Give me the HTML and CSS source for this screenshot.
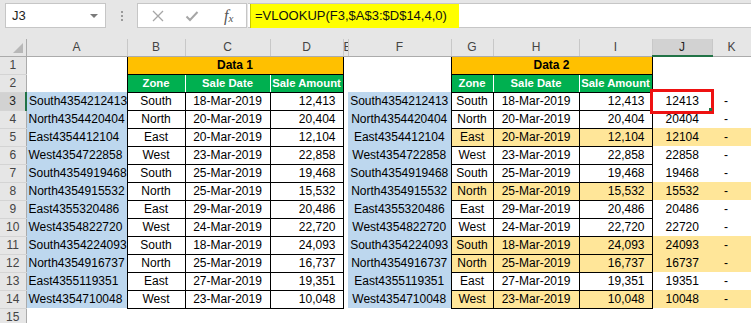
FILE: index.html
```html
<!DOCTYPE html>
<html lang="en">
<head>
    <meta charset="UTF-8">
    <title>VLOOKUP</title>
    <link rel="stylesheet" href="styles.css">
</head>
<body>
    <div class="formula-bar">
        <div class="name-box"><span>J3</span><span class="caret"></span></div>
        <div class="grip"><i></i><i></i><i></i></div>
        <div class="fx-buttons">
            <svg width="12" height="12" viewBox="0 0 12 12"><path d="M1 1 L11 11 M11 1 L1 11" stroke="#a6a6a6" stroke-width="1.3" fill="none"/></svg>
            <svg width="14" height="12" viewBox="0 0 14 12"><path d="M1.5 6.5 L5 10 L12.5 2" stroke="#a6a6a6" stroke-width="2" fill="none"/></svg>
            <span class="fx"><i>f</i><sub>x</sub></span>
        </div>
        <div class="formula-input"><span class="formula">=VLOOKUP(F3,$A$3:$D$14,4,0)</span></div>
    </div>

    <table class="sheet">
        <colgroup>
            <col style="width:26px"><col style="width:101px"><col style="width:58px"><col style="width:85px">
            <col style="width:73px"><col style="width:5px"><col style="width:103px"><col style="width:42px">
            <col style="width:86px"><col style="width:73px"><col style="width:60px"><col style="width:39px">
        </colgroup>
        <thead>
            <tr>
                <th class="corner"><span class="tri"></span></th>
                <th>A</th><th>B</th><th>C</th><th>D</th><th class="narrow">E</th><th>F</th>
                <th>G</th><th>H</th><th>I</th><th class="active">J</th><th>K</th>
            </tr>
        </thead>
        <tbody>
            <tr>
                <th class="rh">1</th><td></td>
                <td class="title" colspan="3">Data 1</td>
                <td></td><td></td>
                <td class="title" colspan="3">Data 2</td>
                <td></td><td></td>
            </tr>
            <tr>
                <th class="rh">2</th><td></td>
                <td class="hd first">Zone</td><td class="hd">Sale Date</td><td class="hd last">Sale Amount</td>
                <td></td><td></td>
                <td class="hd first">Zone</td><td class="hd">Sale Date</td><td class="hd last">Sale Amount</td>
                <td></td><td></td>
            </tr>
            <tr>
                <th class="rh active">3</th><td class="a">South4354212413</td>
                <td class="z">South</td><td class="d">18-Mar-2019</td><td class="n">12,413</td>
                <td></td><td class="f">South4354212413</td>
                <td class="z t2">South</td><td class="d t2">18-Mar-2019</td><td class="n t2">12,413</td>
                <td class="j sel">12413<span class="handle"></span></td><td class="k">-</td>
            </tr>
            <tr>
                <th class="rh">4</th><td class="a">North4354420404</td>
                <td class="z">North</td><td class="d">20-Mar-2019</td><td class="n">20,404</td>
                <td></td><td class="f">North4354420404</td>
                <td class="z t2">North</td><td class="d t2">20-Mar-2019</td><td class="n t2">20,404</td>
                <td class="j">20404</td><td class="k">-</td>
            </tr>
            <tr class="hl">
                <th class="rh">5</th><td class="a">East4354412104</td>
                <td class="z">East</td><td class="d">20-Mar-2019</td><td class="n">12,104</td>
                <td></td><td class="f">East4354412104</td>
                <td class="z t2">East</td><td class="d t2">20-Mar-2019</td><td class="n t2">12,104</td>
                <td class="j">12104</td><td class="k">-</td>
            </tr>
            <tr>
                <th class="rh">6</th><td class="a">West4354722858</td>
                <td class="z">West</td><td class="d">23-Mar-2019</td><td class="n">22,858</td>
                <td></td><td class="f">West4354722858</td>
                <td class="z t2">West</td><td class="d t2">23-Mar-2019</td><td class="n t2">22,858</td>
                <td class="j">22858</td><td class="k">-</td>
            </tr>
            <tr>
                <th class="rh">7</th><td class="a">South4354919468</td>
                <td class="z">South</td><td class="d">25-Mar-2019</td><td class="n">19,468</td>
                <td></td><td class="f">South4354919468</td>
                <td class="z t2">South</td><td class="d t2">25-Mar-2019</td><td class="n t2">19,468</td>
                <td class="j">19468</td><td class="k">-</td>
            </tr>
            <tr class="hl">
                <th class="rh">8</th><td class="a">North4354915532</td>
                <td class="z">North</td><td class="d">25-Mar-2019</td><td class="n">15,532</td>
                <td></td><td class="f">North4354915532</td>
                <td class="z t2">North</td><td class="d t2">25-Mar-2019</td><td class="n t2">15,532</td>
                <td class="j">15532</td><td class="k">-</td>
            </tr>
            <tr>
                <th class="rh">9</th><td class="a">East4355320486</td>
                <td class="z">East</td><td class="d">29-Mar-2019</td><td class="n">20,486</td>
                <td></td><td class="f">East4355320486</td>
                <td class="z t2">East</td><td class="d t2">29-Mar-2019</td><td class="n t2">20,486</td>
                <td class="j">20486</td><td class="k">-</td>
            </tr>
            <tr>
                <th class="rh">10</th><td class="a">West4354822720</td>
                <td class="z">West</td><td class="d">24-Mar-2019</td><td class="n">22,720</td>
                <td></td><td class="f">West4354822720</td>
                <td class="z t2">West</td><td class="d t2">24-Mar-2019</td><td class="n t2">22,720</td>
                <td class="j">22720</td><td class="k">-</td>
            </tr>
            <tr class="hl">
                <th class="rh">11</th><td class="a">South4354224093</td>
                <td class="z">South</td><td class="d">18-Mar-2019</td><td class="n">24,093</td>
                <td></td><td class="f">South4354224093</td>
                <td class="z t2">South</td><td class="d t2">18-Mar-2019</td><td class="n t2">24,093</td>
                <td class="j">24093</td><td class="k">-</td>
            </tr>
            <tr class="hl">
                <th class="rh">12</th><td class="a">North4354916737</td>
                <td class="z">North</td><td class="d">25-Mar-2019</td><td class="n">16,737</td>
                <td></td><td class="f">North4354916737</td>
                <td class="z t2">North</td><td class="d t2">25-Mar-2019</td><td class="n t2">16,737</td>
                <td class="j">16737</td><td class="k">-</td>
            </tr>
            <tr>
                <th class="rh">13</th><td class="a">East4355119351</td>
                <td class="z">East</td><td class="d">27-Mar-2019</td><td class="n">19,351</td>
                <td></td><td class="f">East4355119351</td>
                <td class="z t2">East</td><td class="d t2">27-Mar-2019</td><td class="n t2">19,351</td>
                <td class="j">19351</td><td class="k">-</td>
            </tr>
            <tr class="hl">
                <th class="rh">14</th><td class="a">West4354710048</td>
                <td class="z">West</td><td class="d">23-Mar-2019</td><td class="n">10,048</td>
                <td></td><td class="f">West4354710048</td>
                <td class="z t2">West</td><td class="d t2">23-Mar-2019</td><td class="n t2">10,048</td>
                <td class="j">10048</td><td class="k">-</td>
            </tr>
            <tr>
                <th class="rh">15</th><td></td><td></td><td></td><td></td><td></td><td></td>
                <td></td><td></td><td></td><td></td><td></td>
            </tr>
        </tbody>
    </table>
</body>
</html>
```

FILE: styles.css
```css
:root {
    --chrome: #e6e6e6;
    --chrome-line: #c6c6c6;
    --blue-fill: #bdd7ee;
    --gold-fill: #ffe699;
    --orange: #ffc000;
    --green: #00b050;
    --excel-green: #217346;
}
body {
    margin: 0;
    font-family: "Liberation Sans", Arial, sans-serif;
    background-color: #fff;
    color: #000;
    overflow: hidden;
}
.formula-bar {
    height: 39px;
    box-sizing: border-box;
    padding-top: 3px;
    background-color: var(--chrome);
    display: flex;
    align-items: flex-start;
}
.name-box {
    margin-left: 5px;
    width: 101px;
    height: 25px;
    box-sizing: border-box;
    background-color: #fff;
    border: 1px solid var(--chrome-line);
    display: flex;
    align-items: center;
    justify-content: space-between;
    padding: 0 7px 0 6px;
    font-size: 13px;
    color: #222;
}
.caret {
    width: 0;
    height: 0;
    border-left: 4px solid transparent;
    border-right: 4px solid transparent;
    border-top: 4px solid #7a7a7a;
}
.grip {
    width: 31px;
    height: 25px;
    display: flex;
    flex-direction: column;
    align-items: center;
    justify-content: center;
    gap: 2px;
}
.grip i {
    width: 2px;
    height: 2px;
    background-color: #9a9a9a;
}
.fx-buttons {
    width: 110px;
    height: 25px;
    box-sizing: border-box;
    background-color: #fff;
    border: 1px solid var(--chrome-line);
    display: flex;
    align-items: center;
    padding-left: 14px;
    gap: 22px;
}
.fx-buttons svg:nth-child(2) {
    margin-left: -1px;
}
.fx {
    margin-left: 3px;
    font-family: "Liberation Serif", "Times New Roman", serif;
    font-size: 16px;
    color: #555;
}
.fx sub {
    font-size: 11px;
    font-style: italic;
    vertical-align: -1px;
}
.formula-input {
    flex: 1;
    height: 25px;
    box-sizing: border-box;
    margin-left: 1px;
    background-color: #fff;
    border-top: 1px solid var(--chrome-line);
    border-bottom: 1px solid var(--chrome-line);
    padding-left: 2px;
}
.formula {
    display: inline-block;
    width: 209px;
    height: 24px;
    box-sizing: border-box;
    line-height: 24px;
    padding-left: 4px;
    background-color: #ffff00;
    border-left: 1px solid #c8c800;
    font-size: 13px;
    color: #111;
}

/* grid */
.sheet {
    border-collapse: collapse;
    table-layout: fixed;
    width: 751px;
    font-size: 12px;
}
th,
td {
    height: 17px;
    padding: 0 2px;
    white-space: nowrap;
    overflow: hidden;
    line-height: 16px;
}
.sheet thead th {
    height: 16px;
    padding: 0;
    font-weight: normal;
    color: #444;
    background-color: var(--chrome);
    border-right: 1px solid #c8c8c8;
    border-bottom: 1px solid #ababab;
    text-align: center;
}
.sheet thead th.corner {
    border-right: 1px solid #ababab;
}
.tri {
    display: block;
    width: 0;
    height: 0;
    margin: 3px 3px 2px auto;
    border-left: 10px solid transparent;
    border-bottom: 10px solid #b8b8b8;
}
.sheet thead th.narrow {
    text-align: left;
    border-left: 1px solid #c8c8c8;
}
.sheet thead th.active {
    background-color: #d2d2d2;
    border-bottom: 2px solid var(--excel-green);
    color: #222;
}
.rh {
    padding: 0;
    font-weight: normal;
    color: #444;
    background-color: var(--chrome);
    border-right: 1px solid #ababab;
    border-bottom: 1px solid #d4d4d4;
    text-align: center;
}
.rh.active {
    background-color: #d2d2d2;
    border-right: 2px solid var(--excel-green);
    color: #222;
}
.title {
    background-color: var(--orange);
    border: 1px solid #000;
    text-align: center;
    font-weight: bold;
}
.hd {
    padding: 0 1px;
    background-color: var(--green);
    color: #fff;
    font-weight: bold;
    font-size: 11.3px;
    text-align: center;
    border: 1px solid #000;
    border-left-color: #fff;
    border-right-color: #fff;
}
.hd.first {
    border-left-color: #000;
}
.hd.last {
    border-right-color: #000;
}
.a {
    background-color: var(--blue-fill);
    padding-left: 2px;
}
.f {
    background-color: var(--blue-fill);
    text-align: center;
}
.z,
.d,
.n {
    border: 1px solid #000;
}
.z,
.d {
    text-align: center;
}
.n {
    text-align: right;
    padding-right: 7px;
}
.j {
    text-align: center;
}
.k {
    padding-left: 12px;
}
tr.hl .t2,
tr.hl .j,
tr.hl .k {
    background-color: var(--gold-fill);
}
.sel {
    position: relative;
    overflow: visible;
}
.sel::after {
    content: '';
    position: absolute;
    left: -3px;
    top: -3px;
    right: -2px;
    bottom: -4px;
    border: 3px solid #ee1111;
}
.handle {
    position: absolute;
    right: 0;
    bottom: -1px;
    width: 3px;
    height: 3px;
    background-color: var(--excel-green);
    z-index: 1;
}
```
